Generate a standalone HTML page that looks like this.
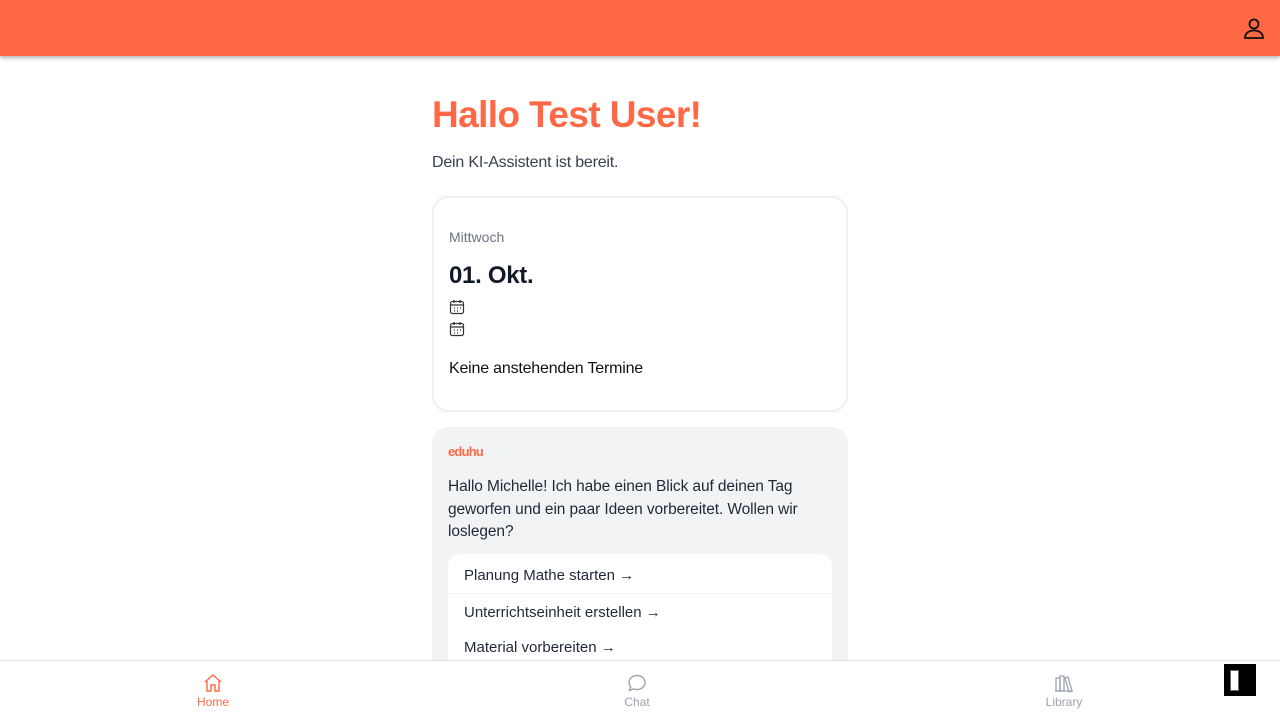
<!DOCTYPE html>
<html><head><meta charset="utf-8"><style>
*{box-sizing:border-box;margin:0;padding:0}
body{width:1280px;height:720px;overflow:hidden;background:#fff;font-family:"Liberation Sans",sans-serif;position:relative}
.top{position:absolute;left:0;top:0;width:1280px;height:56px;background:#ff6845;box-shadow:0 2px 4px rgba(0,0,0,.3)}
.main{position:absolute;left:432px;top:0;width:416px}
h1{position:absolute;top:94px;font-size:37px;font-weight:bold;color:#ff6845;letter-spacing:-0.6px;white-space:nowrap}
.sub{position:absolute;top:154px;font-size:16px;color:#374151;letter-spacing:-0.2px}
.card{position:absolute;top:196px;left:0;width:416px;height:216px;border:2px solid #eeeff1;border-radius:16px}
.ai{position:absolute;top:427px;left:0;width:416px;height:260px;background:#f2f3f5;border-radius:16px}
.opts{position:absolute;left:16px;top:127px;width:384px;height:140px;background:#fff;border-radius:12px}
.opt{height:36px;line-height:44px;padding-left:16px;font-size:15px;color:#1f2937}
.nav{position:absolute;left:0;top:660px;width:1280px;height:60px;background:#fff;border-top:1px solid #e3e3e3}
.ni{position:absolute;top:12px;text-align:center;font-size:12px;width:80px}
</style></head><body>
<div class="top"><svg style="position:absolute;left:1242px;top:16px" width="24" height="24" viewBox="0 0 24 24" fill="none" stroke="#111" stroke-width="1.8"><circle cx="12" cy="8" r="4.5"/><path d="M3 22c0-5 4-7.5 9-7.5s9 2.5 9 7.5z"/></svg></div>
<div class="main">
<h1>Hallo Test User!</h1>
<div class="sub">Dein KI-Assistent ist bereit.</div>
<div class="card">
<div style="position:absolute;left:15px;top:31px;font-size:14px;color:#6b7280">Mittwoch</div>
<div style="position:absolute;left:15px;top:64px;font-size:24px;font-weight:bold;color:#111827;letter-spacing:-0.3px">01. Okt.</div>
<svg style="position:absolute;left:15px;top:101px" width="16" height="38" viewBox="0 0 16 38" fill="none" stroke="#333" stroke-width="1.2"><rect x="1.5" y="2.5" width="13" height="12" rx="2"/><path d="M1.5 6h13M5 1v3M11 1v3M5 9h1M8 9h1M11 9h1M5 12h1M8 12h1"/><rect x="1.5" y="24.5" width="13" height="12" rx="2"/><path d="M1.5 28h13M5 23v3M11 23v3M5 31h1M8 31h1M11 31h1M5 34h1M8 34h1"/></svg>
<div style="position:absolute;left:15px;top:162px;font-size:16px;color:#111;letter-spacing:-0.2px">Keine anstehenden Termine</div>
</div>
<div class="ai">
<div style="position:absolute;left:16px;top:17px;font-size:13px;font-weight:bold;color:#ff6845;letter-spacing:-0.8px">eduhu</div>
<div style="position:absolute;left:16px;top:49px;width:370px;font-size:15.5px;line-height:22.5px;color:#1f2937;letter-spacing:-0.1px">Hallo Michelle! Ich habe einen Blick auf deinen Tag geworfen und ein paar Ideen vorbereitet. Wollen wir loslegen?</div>
<div class="opts">
<div class="opt" style="line-height:44px;height:40px;border-bottom:1px solid #f0f0f0">Planung Mathe starten →</div>
<div class="opt" style="line-height:38px">Unterrichtseinheit erstellen →</div>
<div class="opt" style="line-height:36px">Material vorbereiten →</div>
</div>
</div>
</div>
<div class="nav">
<div class="ni" style="left:173px;color:#ff6845"><svg width="20" height="20" viewBox="0 0 20 20" fill="none" stroke="#ff6845" stroke-width="1.4"><path d="M2 9L10 2l8 7M4 7.5V18h4v-6h4v6h4V7.5"/></svg><div style="margin-top:-1px">Home</div></div>
<div class="ni" style="left:597px;color:#9ca3af"><svg width="20" height="20" viewBox="0 0 20 20" fill="none" stroke="#9ca3af" stroke-width="1.4"><path d="M10 2.5c4.5 0 8 3 8 7s-3.5 7-8 7c-1.2 0-2.3-.2-3.3-.6L2.5 17.5l1.2-3.5C2.6 12.7 2 11.2 2 9.5c0-4 3.5-7 8-7z"/></svg><div style="margin-top:-1px">Chat</div></div>
<div class="ni" style="left:1024px;color:#9ca3af"><svg width="20" height="20" viewBox="0 0 20 20" fill="none" stroke="#9ca3af" stroke-width="1.3"><rect x="2" y="5" width="4" height="13"/><rect x="6" y="3" width="4" height="15"/><path d="M11 5l3-1 4 14-3 1z"/><path d="M1 18h18"/></svg><div style="margin-top:-1px">Library</div></div>
<div style="position:absolute;left:1224px;top:3px;width:32px;height:32px;background:#000"><div style="position:absolute;left:6px;top:6px;width:9px;height:21px;background:#fff;border:1px solid #666"></div></div>
</div>
</body></html>
